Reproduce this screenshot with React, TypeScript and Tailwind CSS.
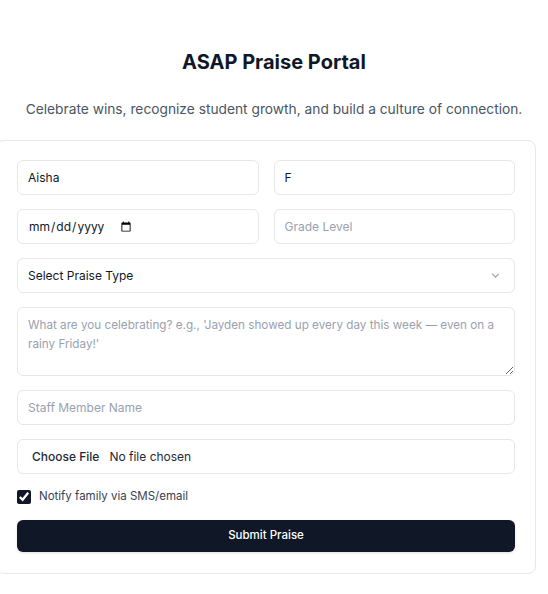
import React from "react";

const box = "h-[35px] w-full rounded-md border border-gray-200 bg-white";
const field = box + " px-2.5 text-[12px] text-gray-900 placeholder:text-gray-400 outline-none";

export default function App() {
  return (
    <div
      className="min-h-screen overflow-hidden bg-white pt-12"
      style={{ fontFamily: "Inter, 'Noto Sans', sans-serif" }}
    >
      <h1 className="text-center text-xl font-bold leading-7 text-gray-900">ASAP Praise Portal</h1>
      <p className="mt-[22px] text-center text-[13.75px] leading-[22px] text-gray-600">
        Celebrate wins, recognize student growth, and build a culture of connection.
      </p>

      <form className="-ml-1 mt-5 flex w-[540px] flex-col gap-3.5 rounded-lg border border-gray-200 bg-white px-5 pb-[21px] pt-[19px]">
        <div className="grid grid-cols-2 gap-[15px]">
          <input className={field} defaultValue="Aisha" />
          <input className={field} defaultValue="F" />
        </div>
        <div className="grid grid-cols-2 gap-[15px]">
          <div className={box + " flex items-center px-2.5"}>
            <input
              type="date"
              className="w-[106px] bg-transparent text-[12px] text-gray-900 outline-none"
            />
          </div>
          <input className={field} placeholder="Grade Level" />
        </div>
        <div className="relative">
          <select className={field + " appearance-none text-gray-700"} defaultValue="">
            <option value="">Select Praise Type</option>
            <option>Attendance</option>
            <option>Academic Growth</option>
            <option>Kindness</option>
          </select>
          <svg
            className="pointer-events-none absolute right-[14px] top-[12px] h-[11px] w-[11px] text-gray-400"
            viewBox="0 0 10 10"
            fill="none"
            stroke="currentColor"
            strokeWidth="1.1"
          >
            <path d="M2 3.5l3 3 3-3" />
          </svg>
        </div>
        <textarea
          className="h-[69px] w-full rounded-md border border-gray-200 px-2.5 py-2 text-[11.7px] leading-[19px] text-gray-900 placeholder:text-gray-400 outline-none"
          placeholder="What are you celebrating? e.g., 'Jayden showed up every day this week — even on a rainy Friday!'"
        />
        <input className={field} placeholder="Staff Member Name" />
        <input
          type="file"
          className="h-[35px] w-full rounded-md border border-gray-200 px-2.5 py-[8px] text-[12px] text-gray-800 file:mr-1.5 file:border-0 file:bg-transparent file:px-1 file:text-[12px] file:font-medium file:text-gray-800"
        />
        <label className="flex h-[18px] items-center gap-2 text-[11.5px] text-gray-700">
          <input type="checkbox" defaultChecked className="m-0 h-[14px] w-[14px] accent-gray-900" />
          Notify family via SMS/email
        </label>
        <button
          type="button"
          className="h-8 w-full rounded-md bg-gray-900 text-[11.5px] font-medium text-white shadow-sm"
        >
          Submit Praise
        </button>
      </form>
    </div>
  );
}
